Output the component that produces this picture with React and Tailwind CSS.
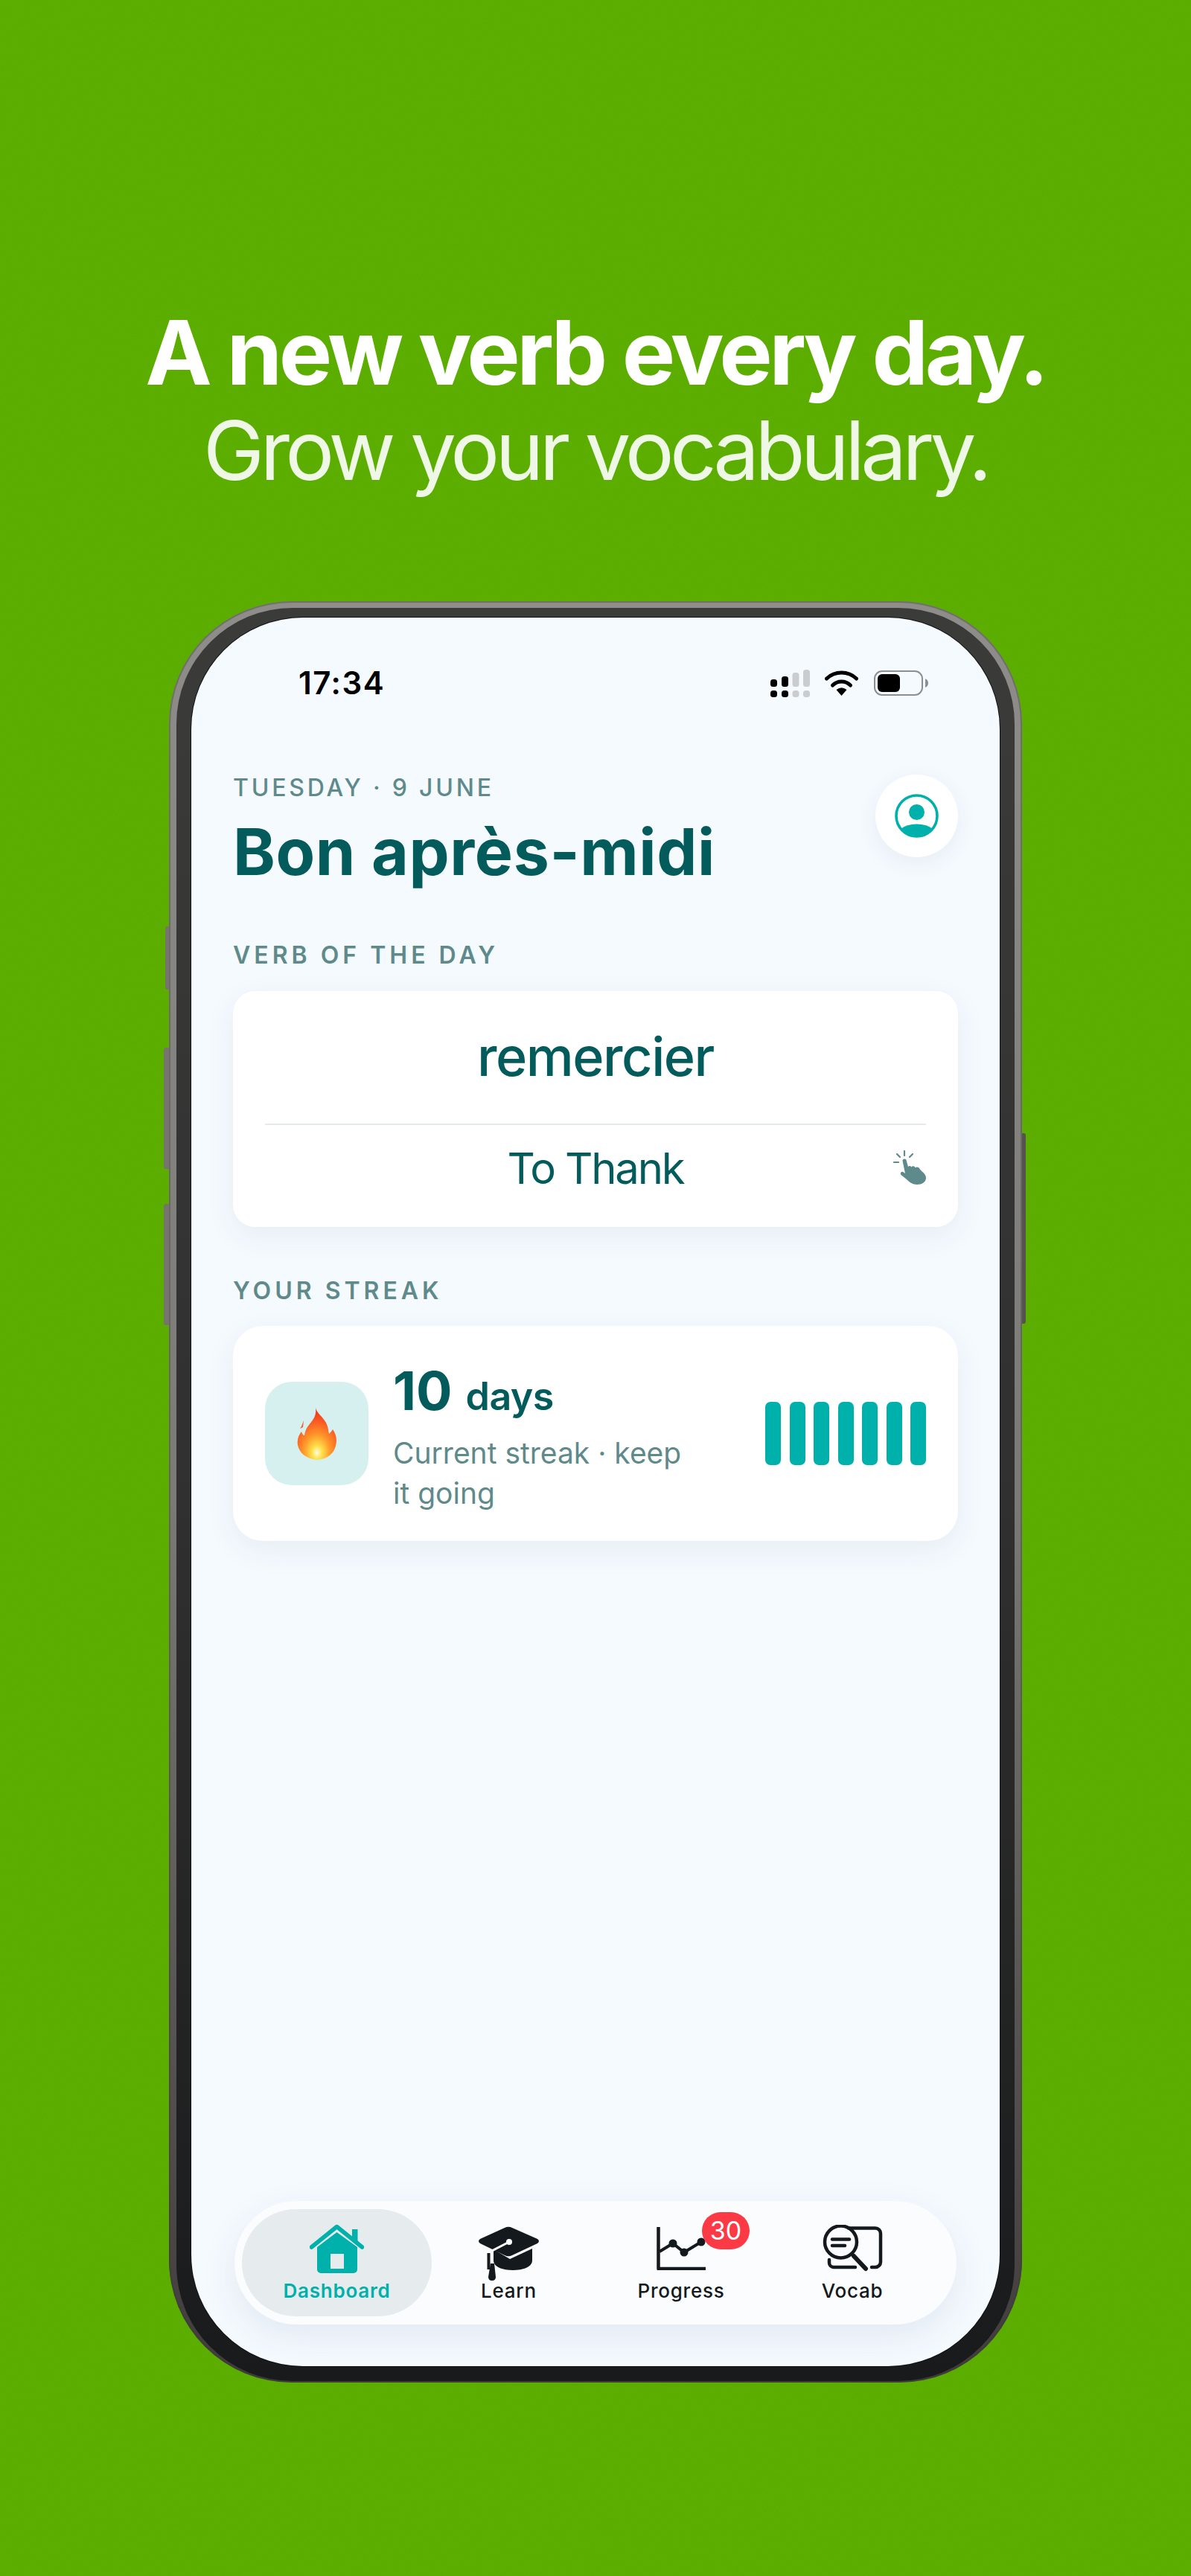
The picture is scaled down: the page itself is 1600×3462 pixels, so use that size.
import React from 'react';

function SignalIcon() {
  const bars = [
    { x: 0, y: 13, h: 10, on: true },
    { x: 15, y: 9, h: 14, on: true },
    { x: 29.5, y: 4, h: 19, on: false },
    { x: 44, y: 0, h: 23, on: false },
  ];
  return (
    <svg width="53" height="37" viewBox="0 0 53 37">
      {bars.map((b) => (
        <g key={b.x} fill={b.on ? '#000' : '#c9cdcf'}>
          <rect x={b.x} y={b.y} width="9" height={b.h} rx="3.5" />
          <rect x={b.x} y="28" width="9" height="9" rx="3.5" />
        </g>
      ))}
    </svg>
  );
}

function WifiIcon() {
  return (
    <svg width="45" height="34" viewBox="0 0 45 34" fill="none">
      <path d="M2.5 11 A29 29 0 0 1 42.5 11" stroke="#000" strokeWidth="5" strokeLinecap="round" />
      <path d="M10.5 20 A17 17 0 0 1 34.5 20" stroke="#000" strokeWidth="5" strokeLinecap="round" />
      <path d="M15.5 26 Q22.5 20.5 29.5 26 L22.5 34 Z" fill="#000" />
    </svg>
  );
}

function BatteryIcon() {
  return (
    <svg width="73" height="34" viewBox="0 0 73 34">
      <rect x="1" y="1" width="64" height="32" rx="10" fill="none" stroke="#8c8f91" strokeWidth="2" />
      <rect x="5" y="5" width="30" height="24" rx="6" fill="#000" />
      <path d="M69 11 q4 2 4 6 q0 4 -4 6 Z" fill="#8c8f91" />
    </svg>
  );
}

function AvatarIcon() {
  return (
    <svg width="59" height="59" viewBox="0 0 59 59" fill="none">
      <circle cx="29.5" cy="29.5" r="27.5" stroke="#00b0aa" strokeWidth="3.6" />
      <circle cx="29.5" cy="24.5" r="10.5" fill="#00b0aa" />
      <path d="M8 47 Q16 40.5 29.5 40.5 Q43 40.5 51 47 A28 28 0 0 1 8 47 Z" fill="#00b0aa" />
    </svg>
  );
}

function TapIcon() {
  return (
    <svg width="44" height="46" viewBox="0 0 44 46" fill="none">
      <g stroke="#5f8a8b" strokeWidth="2.2" strokeLinecap="round">
        <path d="M15 1 V7" />
        <path d="M1 16 H7" />
        <path d="M5 5 L9 9" />
        <path d="M26 5 L22 9" />
      </g>
      <path
        d="M12.5 14 a2.6 2.6 0 0 1 5.2 0 L20 22 c1 -1.5 3.5 -1.5 4.5 .5 c1 -1.8 4 -1.6 5 .8 c1.5 -1.4 5 -1 6 1.5 C37 28 44 31 44 37 C44 43 38 46 32 46 C26 46 22 43 18 39 L10.5 33 C8.5 30.5 11.5 27.5 14 29.5 L16 31 Z"
        fill="#5f8a8b"
      />
    </svg>
  );
}

function FlameIcon() {
  return (
    <svg width="54" height="70" viewBox="0 0 54 70">
      <defs>
        <radialGradient id="flameFill" cx="0.5" cy="0.86" r="0.8">
          <stop offset="0" stopColor="#fffde0" />
          <stop offset="0.16" stopColor="#ffe14a" />
          <stop offset="0.42" stopColor="#ff9a2a" />
          <stop offset="0.75" stopColor="#fb5a22" />
          <stop offset="1" stopColor="#ee3a1c" />
        </radialGradient>
      </defs>
      <path
        d="M25 0 C27 8 34 11 39 20 C42 26 42 30 43 35 C45 33 47 31 48 29 C53 36 54 44 52 51 C50 60 42 69 27 70 C12 69 3 60 1 50 C0 43 2 37 6 32 C7 35 8 37 10 37 C11 29 15 24 20 18 C24 13 26 7 25 0 Z"
        fill="url(#flameFill)"
      />
      <path d="M6 25 L9 17 L8 26 L4 28 Z" fill="#f4562a" />
    </svg>
  );
}

function HouseIcon() {
  return (
    <svg width="73" height="66" viewBox="0 0 73 66" fill="none">
      <rect x="57" y="7" width="7.5" height="17" fill="#00b0aa" />
      <path d="M2.5 31 L36.5 3.5 L70.5 31" stroke="#00b0aa" strokeWidth="5.5" strokeLinecap="round" strokeLinejoin="round" />
      <path
        fillRule="evenodd"
        d="M10 31 L36.5 11 L64 31 V61 a5 5 0 0 1 -5 5 H15 a5 5 0 0 1 -5 -5 Z M28 40 V60 H46 V40 Z"
        fill="#00b0aa"
      />
    </svg>
  );
}

function CapIcon() {
  return (
    <svg width="83" height="73" viewBox="0 0 83 73" fill="none">
      <path
        d="M21 31 V46 C21 54 32 59 47 59 C62 59 73 54 73 46 V30 L43 44 Z"
        fill="#14191d"
      />
      <path
        d="M3 17 L36 2 Q41 -0.5 46 2 L80 17 Q84 20 80 23 L46 39 Q41 41.5 36 39 L3 23 Q-1 20 3 17 Z"
        fill="#14191d"
      />
      <path d="M42 21 L19 33 V45" stroke="#fff" strokeWidth="3" strokeLinecap="round" />
      <circle cx="42" cy="21" r="4" fill="#fff" />
      <path d="M14.5 36 V58" stroke="#14191d" strokeWidth="4" />
      <path d="M17 50 L22 50 L24 68 Q24 73 19 73 Q14 73 14 68 Z" fill="#14191d" />
    </svg>
  );
}

function ChartIcon() {
  return (
    <svg width="66" height="58" viewBox="0 0 66 58" fill="none">
      <path d="M2.5 0 V56 H66" stroke="#14191d" strokeWidth="4.5" strokeLinejoin="round" />
      <path d="M4 33 L22 22 L37 34 L60 20" stroke="#14191d" strokeWidth="4" />
      <circle cx="22" cy="22" r="5.5" fill="#14191d" />
      <circle cx="37" cy="34" r="5.5" fill="#14191d" />
      <circle cx="60" cy="20" r="5.5" fill="#14191d" />
    </svg>
  );
}

function VocabIcon() {
  return (
    <svg width="81" height="63" viewBox="0 0 81 63" fill="none" stroke="#14191d" strokeWidth="4.5" strokeLinecap="round">
      <path d="M35 4.5 H71 a7 7 0 0 1 7 7 V50 a7 7 0 0 1 -7 7 H66" />
      <path d="M9 47 V51 a6 6 0 0 0 6 6 H44" />
      <circle cx="24.5" cy="23" r="21.5" />
      <path d="M13 19.5 H36" />
      <path d="M13 28 H30" />
      <path d="M42 42 L58 59" strokeWidth="6" />
    </svg>
  );
}

function NavItem({ label, active, width, icon, iconClass }) {
  return (
    <div className={`${width} flex flex-col items-center pt-[20px] ${active ? 'h-[144px] rounded-[72px] bg-[#e6ebee]' : ''}`}>
      <div className="h-[74px] flex justify-center">
        <div className={iconClass}>{icon}</div>
      </div>
      <span className={`text-[26px] leading-[32px] tracking-[0.03em] ${active ? 'font-semibold text-[#00b0aa]' : 'font-medium text-[#14191d]'}`}>
        {label}
      </span>
    </div>
  );
}

export default function App() {
  const streakBars = [1, 2, 3, 4, 5, 6, 7];

  return (
    <div className="relative w-[1600px] h-[3462px] overflow-hidden bg-[#5cb000] flex flex-col items-center pt-[408px] [font-family:Inter,sans-serif]">
      {/* grain on the backdrop */}
      <svg className="absolute inset-0 opacity-[0.22]" width="1600" height="3462">
        <filter id="grain">
          <feTurbulence type="fractalNoise" baseFrequency="0.7" numOctaves="2" />
          <feColorMatrix values="0 0 0 0 0.1  0 0 0 0 0.3  0 0 0 0 0  0 0 0 1.4 -0.3" />
        </filter>
        <rect width="1600" height="3462" filter="url(#grain)" />
      </svg>

      <h1 className="relative text-[120px] leading-[132px] font-bold tracking-[-4.4px] text-white whitespace-nowrap">
        A new verb every day.
      </h1>
      <p className="relative mt-[5px] text-[110px] leading-[120px] tracking-[-5.7px] text-white/90 whitespace-nowrap">
        Grow your vocabulary.
      </p>

      {/* phone */}
      <div className="relative mt-[143px] w-[1146px] h-[2394px] shrink-0">
        <div className="absolute left-[-5px] top-[437px] w-[8px] h-[85px] rounded-l-[3px] bg-[#77736f]" />
        <div className="absolute left-[-7px] top-[600px] w-[9px] h-[163px] rounded-l-[3px] bg-[#77736f]" />
        <div className="absolute left-[-7px] top-[810px] w-[9px] h-[163px] rounded-l-[3px] bg-[#77736f]" />
        <div className="absolute right-[-5px] top-[715px] w-[8px] h-[256px] rounded-r-[3px] bg-[#55524f]" />

        <div className="relative w-full h-full rounded-[165px] pt-[9px] px-[10px] pb-[2px] bg-gradient-to-b from-[#8f8d89] via-[#7c7a77] to-[#3f3c3b] shadow-[inset_0_0_0_2px_rgba(60,58,55,0.35)]">
          <div className="w-full h-full rounded-[156px] pt-[13px] px-[20px] pb-[20px] bg-gradient-to-b from-[#3b3b3a] via-[#303030] to-[#191a1b]">
            <div className="w-full h-full rounded-[150px] overflow-hidden bg-[#f5faff] flex flex-col px-[56px] shadow-[0_0_0_1px_#111]">
              {/* status bar */}
              <div className="h-[56px] mt-[60px] pl-[88px] pr-[40px] flex items-center justify-between shrink-0">
                <span className="text-[42px] leading-[56px] font-semibold tracking-[1.5px] text-black">17:34</span>
                <div className="flex items-center">
                  <SignalIcon />
                  <div className="ml-[20px]"><WifiIcon /></div>
                  <div className="ml-[21px]"><BatteryIcon /></div>
                </div>
              </div>

              {/* greeting */}
              <div className="mt-[93px] flex justify-between items-start">
                <div>
                  <p className="text-[32px] leading-[40px] font-medium tracking-[3.8px] text-[#5f8a8b]">TUESDAY · 9 JUNE</p>
                  <h2 className="mt-[18px] text-[86px] leading-[96px] font-bold tracking-[0.6px] text-[#045b5b]">Bon après-midi</h2>
                </div>
                <div className="mt-[2px] w-[111px] h-[111px] rounded-full bg-white flex items-center justify-center shadow-[0_8px_30px_rgba(30,60,90,0.07)]">
                  <AvatarIcon />
                </div>
              </div>

              {/* verb of the day */}
              <p className="mt-[71px] text-[32px] leading-[40px] font-semibold tracking-[5px] text-[#5f8a8b]">VERB OF THE DAY</p>
              <div className="mt-[28px] h-[317px] rounded-[30px] bg-white px-[43px] shadow-[0_12px_40px_rgba(30,60,90,0.07)]">
                <div className="h-[180px] pt-[48px] text-center border-b-2 border-[#e4e9ea]">
                  <span className="text-[72px] leading-[80px] font-medium tracking-[-1.5px] text-[#045b5b]">remercier</span>
                </div>
                <div className="grid grid-cols-[44px_1fr_44px] pt-[26px]">
                  <div />
                  <span className="text-center text-[58px] leading-[64px] tracking-[-2.2px] text-[#045b5b]">To Thank</span>
                  <div className="pt-[8px]"><TapIcon /></div>
                </div>
              </div>

              {/* streak */}
              <p className="mt-[66px] text-[32px] leading-[40px] font-semibold tracking-[5px] text-[#5f8a8b]">YOUR STREAK</p>
              <div className="mt-[27px] h-[289px] rounded-[40px] bg-white px-[43px] flex items-center shadow-[0_12px_40px_rgba(30,60,90,0.07)]">
                <div className="w-[139px] h-[139px] rounded-[36px] bg-[#d5f0ee] flex items-center justify-center shrink-0">
                  <FlameIcon />
                </div>
                <div className="ml-[33px] mt-[10px] w-[410px]">
                  <p className="text-[72px] text-[#045b5b] font-bold leading-[80px]">
                    10
                    <span className="ml-[18px] text-[52px] font-semibold tracking-[-0.6px]">days</span>
                  </p>
                  <p className="mt-[9px] text-[39px] leading-[54px] text-[#5f8a8b]">Current streak · keep it going</p>
                </div>
                <div className="ml-auto flex gap-[11.5px] h-[85px]">
                  {streakBars.map((n) => (
                    <div key={n} className="w-[21px] rounded-[7px] bg-[#00b0aa]" />
                  ))}
                </div>
              </div>

              {/* tab bar */}
              <div className="mt-auto mb-[56px] -mx-[-2px] h-[166px] rounded-[83px] bg-[#fafcfe] pl-[10px] py-[11px] flex shrink-0 shadow-[0_16px_50px_rgba(30,60,90,0.09)]">
                <NavItem label="Dashboard" active width="w-[255px]" icon={<HouseIcon />} />
                <NavItem label="Learn" width="w-[207px]" icon={<CapIcon />} iconClass="mt-[3px]" />
                <NavItem
                  label="Progress"
                  width="w-[256px]"
                  iconClass="relative mt-[4px]"
                  icon={
                    <>
                      <ChartIcon />
                      <span className="absolute left-[61px] top-[-20px] w-[64px] h-[50px] rounded-[25px] bg-[#fb3a45] text-white text-[34px] leading-[50px] text-center">
                        30
                      </span>
                    </>
                  }
                />
                <NavItem label="Vocab" width="w-[204px]" icon={<VocabIcon />} iconClass="mt-[1px]" />
              </div>
            </div>
          </div>
        </div>
      </div>
    </div>
  );
}
